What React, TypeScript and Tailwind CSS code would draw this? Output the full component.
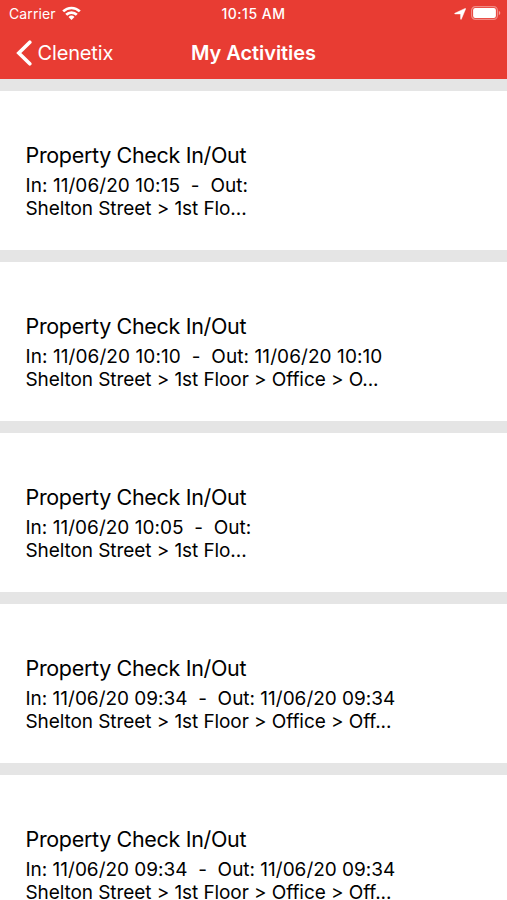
type Activity = { times: string; place: string; tracking: string };

const activities: Activity[] = [
  { times: "In: 11/06/20 10:15  -  Out:", place: "Shelton Street > 1st Flo...", tracking: "tracking-[0.06px]" },
  { times: "In: 11/06/20 10:10  -  Out: 11/06/20 10:10", place: "Shelton Street > 1st Floor > Office > O...", tracking: "tracking-[0.08px]" },
  { times: "In: 11/06/20 10:05  -  Out:", place: "Shelton Street > 1st Flo...", tracking: "tracking-[0.02px]" },
  { times: "In: 11/06/20 09:34  -  Out: 11/06/20 09:34", place: "Shelton Street > 1st Floor > Office > Off...", tracking: "tracking-[-0.01px]" },
  { times: "In: 11/06/20 09:34  -  Out: 11/06/20 09:34", place: "Shelton Street > 1st Floor > Office > Off...", tracking: "tracking-[-0.01px]" },
];

function WifiIcon() {
  return (
    <svg className="relative -top-px h-[14px] w-[19px]" viewBox="0 0 19 14" fill="none" stroke="white" strokeWidth="2.7">
      <path d="M1.2 5.4a11.8 11.8 0 0 1 16.6 0" />
      <path d="M4.2 8.8a7.5 7.5 0 0 1 10.6 0" />
      <path d="M9.5 14 6.5 11a4.3 4.3 0 0 1 6 0Z" fill="white" stroke="none" />
    </svg>
  );
}

function LocationIcon() {
  return (
    <svg className="h-[12px] w-[12px]" viewBox="0 0 12 12" fill="white" stroke="white" strokeWidth=".5">
      <path d="M11.1.5c.4-.2.7.1.5.5L7.3 11.2c-.2.4-.7.3-.7-.1V5.9H1c-.5 0-.6-.5-.1-.7Z" />
    </svg>
  );
}

function BatteryIcon() {
  return (
    <svg className="relative -top-px h-[14px] w-[30px]" viewBox="0 0 30 14" fill="none">
      <rect x=".6" y=".6" width="25.8" height="12.8" rx="3.8" stroke="white" strokeOpacity=".4" strokeWidth="1.2" />
      <rect x="2.1" y="2.1" width="22.8" height="9.8" rx="2" fill="white" />
      <path d="M27.8 4.8c2 .8 2 3.6 0 4.4Z" fill="white" fillOpacity=".5" />
    </svg>
  );
}

function BackIcon() {
  return (
    <svg className="h-[26px] w-[16px]" viewBox="0 0 16 26" fill="none" stroke="white" strokeWidth="3.6" strokeLinecap="round">
      <path d="M13.8 2.2 2.8 13l11 10.8" />
    </svg>
  );
}

export default function App() {
  return (
    <div className="h-[900px] w-[507px] overflow-hidden bg-white font-['Inter',sans-serif] text-black">
      <header className="h-[79px] bg-[#e83c33] text-white">
        <div className="grid h-[27px] grid-cols-3 items-center text-[14px]">
          <div className="flex items-center gap-[6px] pl-[9px]">
            <span className="tracking-[0.1px]">Carrier</span>
            <WifiIcon />
          </div>
          <span className="text-center font-medium tracking-[0.5px]">10:15 AM</span>
          <div className="flex items-center justify-end gap-[5px] pr-[6px]">
            <LocationIcon />
            <BatteryIcon />
          </div>
        </div>
        <div className="grid h-[52px] grid-cols-3 items-center text-[20px]">
          <div className="flex items-center gap-[5.5px] pl-[16px]">
            <BackIcon />
            <span className="tracking-[-0.15px]">Clenetix</span>
          </div>
          <h1 className="text-center font-semibold tracking-[-0.05px]">My Activities</h1>
        </div>
      </header>
      <main>
        {activities.map((activity, i) => (
          <section key={i} className="h-[171px] border-t-[12px] border-[#e5e5e5] pl-[25.5px] pt-[50px]">
            <h2 className="text-[21.5px] leading-[28px] tracking-[-0.33px]">Property Check In/Out</h2>
            <p className={`mt-[5px] whitespace-pre text-[19px] leading-[23px] ${activity.tracking}`}>{activity.times}</p>
            <p className="whitespace-pre text-[19px] leading-[23px] tracking-[-0.08px]">{activity.place}</p>
          </section>
        ))}
      </main>
    </div>
  );
}
